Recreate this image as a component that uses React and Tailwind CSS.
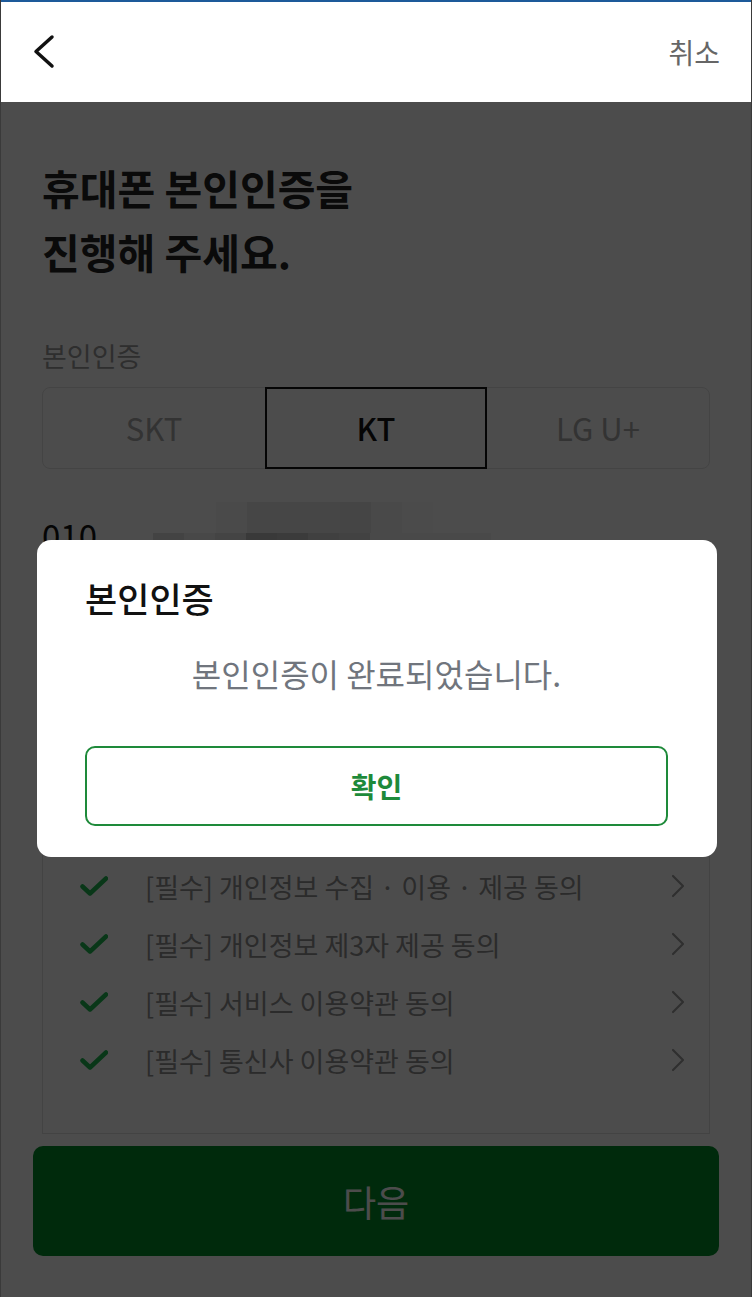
import { useState } from "react"

const agreements = [
    "[필수] 개인정보 수집 · 이용 · 제공 동의",
    "[필수] 개인정보 제3자 제공 동의",
    "[필수] 서비스 이용약관 동의",
    "[필수] 통신사 이용약관 동의",
];

const carriers = ["SKT", "KT", "LG U+"];

// blurred phone number blocks (top row starts later than bottom row)
const mosaicTop = ["#f7f7f7", "#e9e9e9", "#e9e9e9", "#e9e9e9", "#e6e6e6", "#f3f3f3", "#fafafa"];
const mosaicBottom = ["#dfdfdf", "#f0f0f0", "#e3e3e3", "#bebebe", "#c5c5c5", "#d5d5d5", "#dcdcdc", "#f3f3f3"];

function CheckIcon() {
    return (
        <svg width="28" height="20" viewBox="0 0 28 20" fill="none">
            <path d="M2.5 10.5 L10 17.5 L26 2.5" stroke="#1fb852" strokeWidth="4.5" strokeLinecap="round" strokeLinejoin="round" />
        </svg>
    )
}

function ChevronRight() {
    return (
        <svg width="14" height="24" viewBox="0 0 14 24" fill="none">
            <path d="M2 2 L12 12 L2 22" stroke="#9e9e9e" strokeWidth="2.2" strokeLinecap="round" strokeLinejoin="round" />
        </svg>
    )
}

export default function App() {
    const [carrier, setCarrier] = useState("KT");

    return (
        <div className="relative min-h-[1297px] w-full bg-white border-x border-[#3a3a3a] font-['Noto_Sans_CJK_KR','Noto_Sans',sans-serif] overflow-hidden">
            {/* header */}
            <div className="h-[102px] border-t-2 border-[#1d5a9a] flex items-center justify-between pl-[31px] pr-[31px]">
                <svg width="24" height="36" viewBox="0 0 24 36" fill="none">
                    <path d="M20 3 L4 17.5 L20 32" stroke="#111" strokeWidth="3.5" strokeLinecap="round" strokeLinejoin="round" />
                </svg>
                <span className="text-[28px] text-[#666] leading-none">취소</span>
            </div>

            <div className="px-[41px]">
                <h1 className="pt-[53px] text-[41px] leading-[64px] font-bold text-[#222]">
                    휴대폰 본인인증을<br />진행해 주세요.
                </h1>

                <div className="mt-[55px] text-[27px] leading-[36px] text-[#9c9c9c]">본인인증</div>

                <div className="mt-[13px] grid grid-cols-3 h-[82px] rounded-lg border border-[#e3e3e3]">
                    {carriers.map((c) => (
                        <button
                            key={c}
                            onClick={() => setCarrier(c)}
                            className={c == carrier
                                ? "-my-px border-2 border-[#111] text-[31px] font-medium text-[#111]"
                                : "text-[31px] text-[#aaa]"}
                        >
                            {c}
                        </button>
                    ))}
                </div>

                <div className="mt-[33px] flex items-start">
                    <div className="mt-[10px] text-[33px] leading-[46px] text-[#111]">010</div>
                    <div className="ml-[56px] flex flex-col">
                        <div className="flex h-[31px] pl-[63px]">
                            {mosaicTop.map((col, i) => (
                                <div key={i} className="w-[31px] h-full" style={{ background: col }}></div>
                            ))}
                        </div>
                        <div className="flex h-[7px]">
                            {mosaicBottom.map((col, i) => (
                                <div key={i} className="w-[31px] h-full" style={{ background: col }}></div>
                            ))}
                            <div className="w-[90px] h-full bg-[#f6f6f6]"></div>
                        </div>
                    </div>
                </div>

                <div className="mt-[280px] border border-[#e0e0e0] pt-[18px] pb-[44px] pl-[37px] pr-[24px]">
                    {agreements.map((a) => (
                        <div key={a} className="h-[58px] flex items-center">
                            <CheckIcon />
                            <span className="ml-[37px] flex-1 text-[27px] text-[#909090] leading-none">{a}</span>
                            <ChevronRight />
                        </div>
                    ))}
                </div>

                <button className="mt-[12px] -mx-[9px] w-[calc(100%+18px)] h-[110px] rounded-[10px] bg-[#008c28] text-white text-[36px]">
                    다음
                </button>
            </div>

            {/* dim overlay */}
            <div className="absolute inset-x-0 top-[102px] bottom-0 bg-black/70"></div>

            {/* dialog */}
            <div className="absolute left-[36px] top-[540px] w-[680px] h-[317px] bg-white rounded-[14px] pl-[48px] pr-[49px] pt-[38px]">
                <div className="text-[35px] leading-[40px] font-medium text-[#111]">본인인증</div>
                <div className="mt-[35px] text-center text-[32px] leading-[40px] text-[#70757d]">본인인증이 완료되었습니다.</div>
                <button className="mt-[53px] w-full h-[80px] rounded-[10px] border-2 border-[#1e8a3a] text-[28px] font-bold text-[#1e8a3a]">
                    확인
                </button>
            </div>
        </div>
    )
}
